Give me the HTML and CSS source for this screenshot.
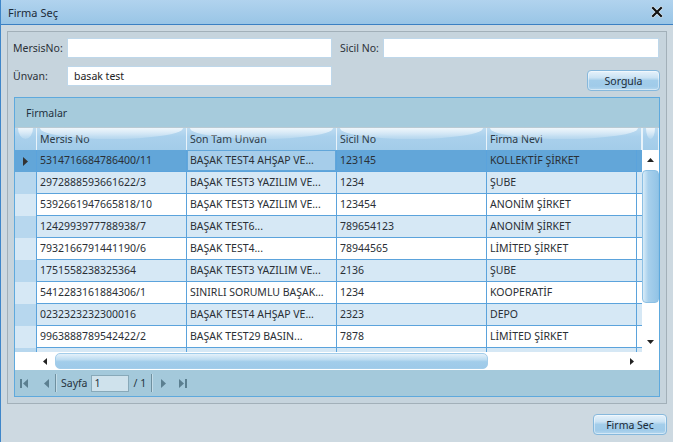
FILE: index.html
```html
<!DOCTYPE html>
<html lang="tr">
<head>
<meta charset="utf-8">
<title>Firma Seç</title>
<link rel="stylesheet" href="styles.css">
</head>
<body>
<div class="window">
  <div class="titlebar">
    <span class="title">Firma Seç</span>
    <svg class="close" width="12" height="12" viewBox="0 0 12 12">
      <path d="M2 2 L10 10 M10 2 L2 10" stroke="#fff" stroke-width="3.6" stroke-linecap="square" opacity="0.6"/>
      <path d="M2 2 L10 10 M10 2 L2 10" stroke="#111" stroke-width="2.2" stroke-linecap="square"/>
    </svg>
  </div>
  <div class="body">
    <div class="panel">
      <div class="form-row">
        <label class="lbl lbl-first">MersisNo:</label>
        <div class="field field-main"></div>
        <label class="lbl lbl-sicil">Sicil No:</label>
        <div class="field field-sicil"></div>
      </div>
      <div class="form-row row2">
        <label class="lbl lbl-first">Ünvan:</label>
        <div class="field field-main">basak test</div>
        <div class="btn btn-sorgula">Sorgula</div>
      </div>
      <div class="grid-group">
        <div class="group-header">Firmalar</div>
        <div class="grid-head">
          <div class="hc hc-ind"></div>
          <div class="hc hc-col">Mersis No</div>
          <div class="hc hc-col">Son Tam Unvan</div>
          <div class="hc hc-col">Sicil No</div>
          <div class="hc hc-col hc-last">Firma Nevi</div>
          <div class="hc hc-scroll"></div>
        </div>
        <div class="grid-main">
          <div class="rows">
            <div class="row sel">
              <div class="ind"><svg width="6" height="9" viewBox="0 0 6 9"><polygon points="0,0 5,4.5 0,9" fill="#333"/></svg></div>
              <div class="c">5314716684786400/11</div>
              <div class="c focus">BAŞAK TEST4 AHŞAP VE...</div>
              <div class="c">123145</div>
              <div class="c">KOLLEKTİF ŞİRKET</div>
              <div class="f"></div>
            </div>
            <div class="row alt">
              <div class="ind"></div>
              <div class="c">2972888593661622/3</div>
              <div class="c">BAŞAK TEST3 YAZILIM VE...</div>
              <div class="c">1234</div>
              <div class="c">ŞUBE</div>
              <div class="f"></div>
            </div>
            <div class="row">
              <div class="ind"></div>
              <div class="c">5392661947665818/10</div>
              <div class="c">BAŞAK TEST3 YAZILIM VE...</div>
              <div class="c">123454</div>
              <div class="c">ANONİM ŞİRKET</div>
              <div class="f"></div>
            </div>
            <div class="row alt">
              <div class="ind"></div>
              <div class="c">1242993977788938/7</div>
              <div class="c">BAŞAK TEST6...</div>
              <div class="c">789654123</div>
              <div class="c">ANONİM ŞİRKET</div>
              <div class="f"></div>
            </div>
            <div class="row">
              <div class="ind"></div>
              <div class="c">7932166791441190/6</div>
              <div class="c">BAŞAK TEST4...</div>
              <div class="c">78944565</div>
              <div class="c">LİMİTED ŞİRKET</div>
              <div class="f"></div>
            </div>
            <div class="row alt">
              <div class="ind"></div>
              <div class="c">1751558238325364</div>
              <div class="c">BAŞAK TEST3 YAZILIM VE...</div>
              <div class="c">2136</div>
              <div class="c">ŞUBE</div>
              <div class="f"></div>
            </div>
            <div class="row">
              <div class="ind"></div>
              <div class="c">5412283161884306/1</div>
              <div class="c">SINIRLI SORUMLU BAŞAK...</div>
              <div class="c">1234</div>
              <div class="c">KOOPERATİF</div>
              <div class="f"></div>
            </div>
            <div class="row alt">
              <div class="ind"></div>
              <div class="c">0232323232300016</div>
              <div class="c">BAŞAK TEST4 AHŞAP VE...</div>
              <div class="c">2323</div>
              <div class="c">DEPO</div>
              <div class="f"></div>
            </div>
            <div class="row">
              <div class="ind"></div>
              <div class="c">9963888789542422/2</div>
              <div class="c">BAŞAK TEST29 BASIN...</div>
              <div class="c">7878</div>
              <div class="c">LİMİTED ŞİRKET</div>
              <div class="f"></div>
            </div>
            <div class="row alt">
              <div class="ind"></div>
              <div class="c"></div>
              <div class="c"></div>
              <div class="c"></div>
              <div class="c"></div>
              <div class="f"></div>
            </div>
          </div>
          <div class="vscroll">
            <div class="varrow"><svg width="7" height="4" viewBox="0 0 7 4"><polygon points="0,4 3.5,0 7,4" fill="#222"/></svg></div>
            <div class="vthumb"></div>
            <div class="vspace"></div>
            <div class="varrow"><svg width="7" height="4" viewBox="0 0 7 4"><polygon points="0,0 7,0 3.5,4" fill="#222"/></svg></div>
          </div>
        </div>
        <div class="hscroll">
          <svg class="harrow-l" width="4" height="7" viewBox="0 0 4 7"><polygon points="4,0 0,3.5 4,7" fill="#222"/></svg>
          <div class="hthumb"></div>
          <svg class="harrow-r" width="4" height="7" viewBox="0 0 4 7"><polygon points="0,0 4,3.5 0,7" fill="#222"/></svg>
        </div>
        <div class="pager">
          <svg class="pg-first" width="8" height="9" viewBox="0 0 8 9"><rect x="0" y="0" width="2" height="9" fill="#5b7f90"/><polygon points="8,0 3,4.5 8,9" fill="#5b7f90"/></svg>
          <svg class="pg-prev" width="5" height="9" viewBox="0 0 5 9"><polygon points="5,0 0,4.5 5,9" fill="#5b7f90"/></svg>
          <span class="pg-sep"></span>
          <span class="pg-label">Sayfa</span>
          <div class="pg-input">1</div>
          <span class="pg-total">/ 1</span>
          <span class="pg-sep pg-sep2"></span>
          <svg class="pg-next" width="5" height="9" viewBox="0 0 5 9"><polygon points="0,0 5,4.5 0,9" fill="#5b7f90"/></svg>
          <svg class="pg-last" width="8" height="9" viewBox="0 0 8 9"><polygon points="0,0 5,4.5 0,9" fill="#5b7f90"/><rect x="6" y="0" width="2" height="9" fill="#5b7f90"/></svg>
        </div>
      </div>
    </div>
    <div class="footer">
      <div class="btn btn-sec">Firma Sec</div>
    </div>
  </div>
</div>
</body>
</html>
```
FILE: styles.css
```css
* { box-sizing: border-box; margin: 0; padding: 0; }
html, body { width: 673px; height: 442px; overflow: hidden; }
body {
  background: #cdd9e1;
  font-family: "Noto Sans", "Open Sans", sans-serif;
  font-size: 10.5px;
  color: #2a2f35;
}
.window {
  width: 673px;
  height: 442px;
  border-left: 1px solid #3f86c9;
  display: flex;
  flex-direction: column;
}
.titlebar {
  height: 25px;
  flex: none;
  border-bottom: 1px solid #3b80c3;
  background: linear-gradient(#b1d3ee, #99c5e6);
  display: flex;
  align-items: center;
  padding: 0 10px 0 7px;
}
.title { flex: 1; font-size: 11px; color: #1c2a38; }
.close { display: block; }

.body { padding: 6px 6px 0 6px; }
.panel {
  height: 373px;
  border: 1px solid #a2b0b9;
  background: #c6d4dd;
  padding: 6px 5px 6px 6px;
}
.form-row { display: flex; align-items: center; height: 20px; }
.row2 { margin-top: 8px; height: 24px; align-items: flex-start; }
.row2 .lbl { height: 20px; display: flex; align-items: center; }
.lbl { color: #2b3138; white-space: nowrap; }
.lbl-first { width: 54px; margin-left: -1px; padding-right: 1px; }
.lbl-sicil { width: 43px; margin-left: 8px; }
.field {
  height: 20px;
  background: #fff;
  border: 1px solid #bed7ea;
  padding-left: 6px;
  line-height: 18px;
  color: #222;
}
.field-main { width: 265px; }
.field-sicil { width: 276px; }

.btn {
  height: 21px;
  border: 1px solid #86b8dc;
  border-radius: 4px;
  background: linear-gradient(#e6f2fb 0%, #cbe3f4 35%, #a3cdea 50%, #a0cbe9 80%, #b4d7ef 100%);
  box-shadow: inset 0 0 0 1px rgba(255,255,255,0.45);
  display: flex;
  align-items: center;
  justify-content: center;
  color: #1c2a36;
  font-size: 10.5px;
}
.btn-sorgula { width: 73px; margin-left: auto; margin-right: 1px; margin-top: 4px; }

.grid-group {
  margin-top: 7px;
  width: 646px;
  height: 300px;
  border: 1px solid #5ea9dd;
  display: flex;
  flex-direction: column;
}
.group-header {
  height: 30px;
  flex: none;
  background: #a6cbdc;
  border-bottom: 1px solid #b9cad3;
  padding-left: 11px;
  display: flex;
  align-items: center;
  color: #233240;
}
.grid-head { height: 22px; flex: none; display: flex; }
.hc {
  position: relative;
  height: 22px;
  border-right: 1px solid #e8f3fa;
  background: linear-gradient(#bedcf1 0%, #a9d0ec 40%, #a3cce9 100%);
  display: flex;
  align-items: center;
  padding-left: 3px;
  color: #2c3a46;
  overflow: hidden;
}
.hc::before {
  content: "";
  position: absolute;
  left: 3px; right: 3px; top: 0;
  height: 11px;
  border-radius: 0 0 50% 50% / 0 0 100% 100%;
  background: linear-gradient(rgba(255,255,255,0.75), rgba(255,255,255,0.15));
}
.hc span, .hc { z-index: 0; }
.hc-ind { width: 22px; }
.hc-col { width: 150px; }
.hc-last { width: 155px; }
.hc-scroll { width: 17px; border-right: 1px solid #e8f3fa; border-left: 1px solid #e8f3fa; }

.grid-main { height: 202px; flex: none; display: flex; }
.rows { width: 627px; overflow: hidden; }
.row { display: flex; height: 22px; background: #fff; }
.row .ind { width: 22px; flex: none; background: #d6e8f5; border-right: 1px solid #5ba3dc; display: flex; align-items: center; padding-left: 8px; }
.row.alt { background: #d6e8f5; }
.row.alt .ind { background: #b7d7ee; }
.row.sel { background: #62a6d9; }
.row.sel .ind { background: #62a6d9; }
.c {
  width: 150px;
  flex: none;
  border-right: 1px solid #5ba3dc;
  border-bottom: 1px solid #5ba3dc;
  padding-left: 3px;
  line-height: 21px;
  white-space: nowrap;
  overflow: hidden;
  color: #2a2f35;
}
.c.focus { background: #a6cdea; box-shadow: inset 0 0 0 1px #62a6d9; }
.f { width: 5px; flex: none; border-bottom: 1px solid #5ba3dc; }
.row.sel .f, .row.sel .c { border-bottom-color: #5ba3dc; }

.vscroll { width: 17px; background: #fff; display: flex; flex-direction: column; }
.varrow { height: 20px; display: flex; align-items: center; justify-content: center; }
.vthumb {
  height: 133px;
  border: 1px solid #8cc0e4;
  border-radius: 4px;
  background: linear-gradient(90deg, #d9ecf8 0%, #a8d0ec 35%, #93c4e6 100%);
}
.vspace { flex: 1; }

.hscroll {
  height: 18px;
  flex: none;
  background: #fff;
  display: flex;
  align-items: center;
  padding-left: 28px;
}
.harrow-l { display: block; }
.hthumb {
  margin-left: 8px;
  width: 433px;
  height: 16px;
  border: 1px solid #a3cdea;
  border-radius: 5px;
  background: linear-gradient(#e4f1fa 0%, #bddcf1 40%, #a2cdea 55%, #9ecae9 100%);
}
.harrow-r { display: block; margin-left: auto; margin-right: 25px; }

.pager {
  flex: 1;
  background: #a4c9db;
  display: flex;
  align-items: center;
  padding-left: 5px;
  color: #26333d;
}
.pager svg { display: block; }
.pg-prev { margin-left: 16px; }
.pg-sep { width: 2px; height: 18px; margin-left: 6px; border-left: 1px solid #6f909f; border-right: 1px solid #c3dce8; }
.pg-label { margin-left: 4px; }
.pg-input {
  margin-left: 3px;
  width: 38px;
  height: 17px;
  background: #cfe2ec;
  border: 1px solid #88a9b9;
  padding-left: 3px;
  line-height: 15px;
}
.pg-total { margin-left: 5px; }
.pg-sep2 { margin-left: 5px; }
.pg-next { margin-left: 8px; }
.pg-last { margin-left: 13px; }

.footer { display: flex; justify-content: flex-end; padding-top: 10px; }
.btn-sec { width: 74px; }
```
